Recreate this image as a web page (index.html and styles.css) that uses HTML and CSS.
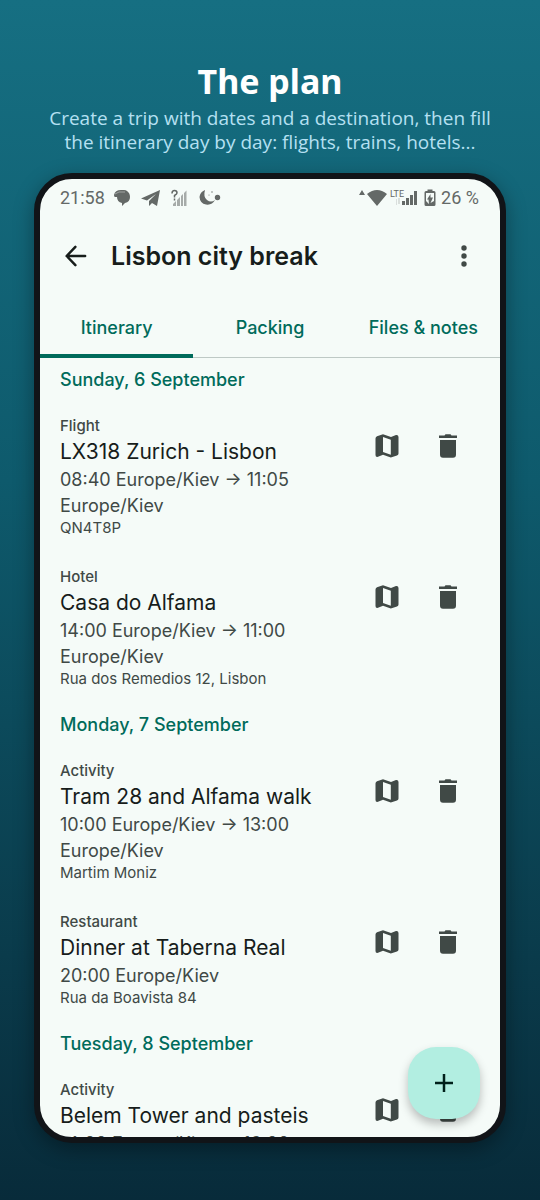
FILE: index.html
```
<!DOCTYPE html>
<html lang="en">
<head>
<meta charset="utf-8">
<meta name="viewport" content="width=device-width, initial-scale=1">
<title>The plan</title>
<link rel="stylesheet" href="styles.css">
</head>
<body>
<svg class="defs" aria-hidden="true">
  <symbol id="map" viewBox="0 0 30 30"><path fill-rule="evenodd" d="M18.800 26.500 11 23.800 6 25.800Q3.500 26.300 3.500 24V7.500Q3.500 6 5 5.300L11 3.300l8 2.700 5-2Q26.500 3.700 26.500 6V22.500Q26.500 24 25 24.600ZM18.800 23.700V8.700L11 6V21Z"/></symbol>
  <symbol id="trash" viewBox="0 0 30 30"><path d="M6 4.500h5.500L12.500 3.300h5L18.500 4.500H24V7H6ZM7 9H23V23.500Q23 26.700 20 26.700H10Q7 26.700 7 23.500Z"/></symbol>
</svg>
<main class="poster">
  <header class="intro">
    <h1>The plan</h1>
    <p>Create a trip with dates and a destination, then fill the itinerary day by day: flights, trains, hotels...</p>
  </header>
  <section class="phone">
    <div class="status">
      <span class="clock">21:58</span>
      <svg class="s-chat" width="18" height="18" viewBox="0 0 18 18"><path d="M1 6Q2 1 8 1h3q2 0 3 1Q17 4 17 8q0 5-5 6l-3 3v-3Q4 13 4 8H2Q1 8 1 6Z"/><path d="M2 5Q5 2 12 3" fill="none" stroke="#a0a4a2"/></svg>
      <svg class="s-send" width="19" height="18" viewBox="0 0 19 18"><path d="M0 9.500 19 1 16 17l-5-3-3 3v-5l7-7-9 6.500Z"/></svg>
      <svg class="s-sim" width="16" height="18" viewBox="0 0 16 18"><path d="M2 17v-2l3-3v5zm4 0v-6l3-3v9zm4 0V7l2-2v12zm3 0V4l2.500-2.500V17z" opacity=".55"/><path d="M1 4.500q0-3 2.500-3T6 4Q6 5 3.500 6.500v2M3.500 9.500v2" fill="none" stroke="#646967" stroke-width="1.500"/></svg>
      <svg class="s-moon" width="23" height="18" viewBox="0 0 23 18"><path d="M7 1Q5 8 9 11t8 0Q14 16.500 8 15.500T1.500 8Q2 3 7 1Z"/><circle cx="19.500" cy="8.500" r="2.700"/><circle cx="14" cy="3" r=".7"/><circle cx="11" cy="6" r=".5"/></svg>
      <span class="spacer"></span>
      <svg class="s-wifi" width="28" height="18" viewBox="0 0 28 18"><path d="M0 6 3 1l3 5ZM8 5q10-8 20 0L18 17Z"/></svg>
      <span class="lte">LTE</span>
      <svg class="s-bars" width="21" height="18" viewBox="0 0 21 18"><path d="M6 16v-4h3v4zm4 0V9h3v7zm4 0V6h3v10zm4 0V2h3v14z"/><path d="M0 10v6M3 9v6" stroke="#bfc4c1" stroke-width="1"/></svg>
      <svg class="s-batt" width="12" height="18" viewBox="0 0 12 18"><path fill-rule="evenodd" d="M3.500 2V.5h5V2H10q1.500 0 1.500 1.500v12Q11.500 17 10 17H2Q.5 17 .5 15.500v-12Q.5 2 2 2ZM2 4v8l3 3-.5-4.500H3L6.500 5v3.500H9L6.500 14l3.500-2V4Z"/></svg>
      <span class="level">26 %</span>
    </div>
    <div class="appbar">
      <button class="icon-btn" aria-label="Back"><svg width="30" height="30" viewBox="0 0 24 24"><path d="M11.500 4.700 4.500 12l7 7.300M4.700 12H19.300" fill="none" stroke="#171d1b" stroke-width="2" stroke-linecap="round" stroke-linejoin="round"/></svg></button>
      <h2>Lisbon city break</h2>
      <button class="icon-btn more" aria-label="More options"><svg width="30" height="30" viewBox="0 0 30 30"><circle cx="15" cy="7" r="2.700"/><circle cx="15" cy="15" r="2.700"/><circle cx="15" cy="23" r="2.700"/></svg></button>
    </div>
    <nav class="tabs" role="tablist">
      <button class="tab active" role="tab" aria-selected="true">Itinerary</button>
      <button class="tab" role="tab" aria-selected="false">Packing</button>
      <button class="tab" role="tab" aria-selected="false">Files &amp; notes</button>
    </nav>
    <div class="list">
      <h3>Sunday, 6 September</h3>
      <article class="item">
        <div class="info">
          <div class="kind">Flight</div>
          <div class="name">LX318 Zurich - Lisbon</div>
          <div class="time">08:40 Europe/Kiev → 11:05 Europe/Kiev</div>
          <div class="note">QN4T8P</div>
        </div>
        <button class="icon-btn" aria-label="Map"><svg><use href="#map"/></svg></button>
        <button class="icon-btn" aria-label="Delete"><svg><use href="#trash"/></svg></button>
      </article>
      <article class="item">
        <div class="info">
          <div class="kind">Hotel</div>
          <div class="name">Casa do Alfama</div>
          <div class="time">14:00 Europe/Kiev → 11:00 Europe/Kiev</div>
          <div class="note">Rua dos Remedios 12, Lisbon</div>
        </div>
        <button class="icon-btn" aria-label="Map"><svg><use href="#map"/></svg></button>
        <button class="icon-btn" aria-label="Delete"><svg><use href="#trash"/></svg></button>
      </article>
      <h3>Monday, 7 September</h3>
      <article class="item">
        <div class="info">
          <div class="kind">Activity</div>
          <div class="name">Tram 28 and Alfama walk</div>
          <div class="time">10:00 Europe/Kiev → 13:00 Europe/Kiev</div>
          <div class="note">Martim Moniz</div>
        </div>
        <button class="icon-btn" aria-label="Map"><svg><use href="#map"/></svg></button>
        <button class="icon-btn" aria-label="Delete"><svg><use href="#trash"/></svg></button>
      </article>
      <article class="item">
        <div class="info">
          <div class="kind">Restaurant</div>
          <div class="name">Dinner at Taberna Real</div>
          <div class="time">20:00 Europe/Kiev</div>
          <div class="note">Rua da Boavista 84</div>
        </div>
        <button class="icon-btn" aria-label="Map"><svg><use href="#map"/></svg></button>
        <button class="icon-btn" aria-label="Delete"><svg><use href="#trash"/></svg></button>
      </article>
      <h3>Tuesday, 8 September</h3>
      <article class="item">
        <div class="info">
          <div class="kind">Activity</div>
          <div class="name">Belem Tower and pasteis</div>
          <div class="time">14:00 Europe/Kiev → 16:00 Europe/Kiev</div>
        </div>
        <button class="icon-btn" aria-label="Map"><svg><use href="#map"/></svg></button>
        <button class="icon-btn" aria-label="Delete"><svg><use href="#trash"/></svg></button>
      </article>
    </div>
    <button class="fab" aria-label="Add"><svg width="30" height="30" viewBox="0 0 30 30"><path d="M15 6v18M6 15h18" stroke="#00201b" stroke-width="2.500"/></svg></button>
  </section>
</main>
</body>
</html>
```
FILE: styles.css
```
* { box-sizing: border-box; }
body { margin: 0; font-family: Inter, "Liberation Sans", sans-serif; color: #171d1b; }
h1, h2, h3, p { margin: 0; }
button { border: 0; padding: 0; background: none; font: inherit; color: inherit; cursor: pointer; }
.defs { position: absolute; width: 0; height: 0; }

.poster {
  height: 100vh;
  display: flex;
  flex-direction: column;
  padding: 58px 34px 57px;
  background: linear-gradient(#166f82, #0e5a6c 40%, #082b3a);
}
.intro { text-align: center; font-family: "Open Sans", "Noto Sans", sans-serif; margin-bottom: 19px; }
.intro h1 { margin-bottom: 2px; font-family: "Noto Sans", sans-serif; font-size: 34px; line-height: 46px; font-weight: 700; color: #fff; }
.intro p { padding: 0 8px; font-size: 19px; line-height: 24px; color: #b5e0f2; }

.phone {
  position: relative;
  flex: 1;
  min-height: 0;
  display: flex;
  flex-direction: column;
  overflow: hidden;
  border: 6px solid #111418;
  border-radius: 38px;
  background: #f5fbf8;
  box-shadow: 0 6px 20px rgba(0, 0, 0, .35);
}

.status {
  display: flex;
  align-items: center;
  height: 37px;
  flex: none;
  padding: 0 21px 0 20px;
  font-family: Roboto, sans-serif;
  font-size: 18px;
  color: #646967;
  fill: #646967;
}
.spacer { flex: 1; }
.s-chat { margin-left: 8px; }
.s-send { margin-left: 10px; }
.s-sim { margin-left: 11px; }
.s-moon { margin-left: 11px; }
.lte { font-size: 9px; line-height: 9px; align-self: flex-start; margin: 11px 0 0 3px; }
.s-bars { margin-left: -8px; }
.s-batt { margin: 0 5px 0 7px; }

.icon-btn { flex: none; width: 61px; height: 61px; display: grid; place-items: center; color: #404946; fill: currentColor; }
.item .icon-btn svg { width: 30px; height: 30px; }

.appbar { flex: none; display: flex; align-items: center; height: 79px; padding: 0 6px 0 5px; }
.appbar h2 { flex: 1; margin-left: 5px; font-size: 25px; line-height: 32px; font-weight: 600; }

.tabs { flex: none; display: grid; grid-template-columns: repeat(3, 1fr); height: 61px; margin-top: 2px; border-bottom: 1px solid #bec9c5; }
.tab { color: #006b5b; font-size: 18px; font-weight: 500; white-space: nowrap; }
.tab.active { box-shadow: inset 0 -3px #006b5b, 0 1px #006b5b; }

.list { flex: 1; min-height: 0; overflow: hidden; }
.list h3 { padding: 0 20px; font-size: 18px; line-height: 43px; font-weight: 500; color: #006b5b; }
.item { display: flex; align-items: flex-start; padding: 14px 22px 16px 20px; }
.info { flex: 1; color: #404946; }
.kind { font-size: 15px; line-height: 21px; font-weight: 500; }
.name { font-size: 21px; line-height: 31px; color: #171d1b; }
.time { font-size: 18px; line-height: 26px; }
.note { font-size: 15px; line-height: 17px; }

.fab {
  position: absolute;
  right: 20px;
  bottom: 18px;
  width: 72px;
  height: 72px;
  display: grid;
  place-items: center;
  border-radius: 28px;
  background: #b2eee1;
  box-shadow: 0 5px 10px rgba(0, 0, 0, .25);
}
```
